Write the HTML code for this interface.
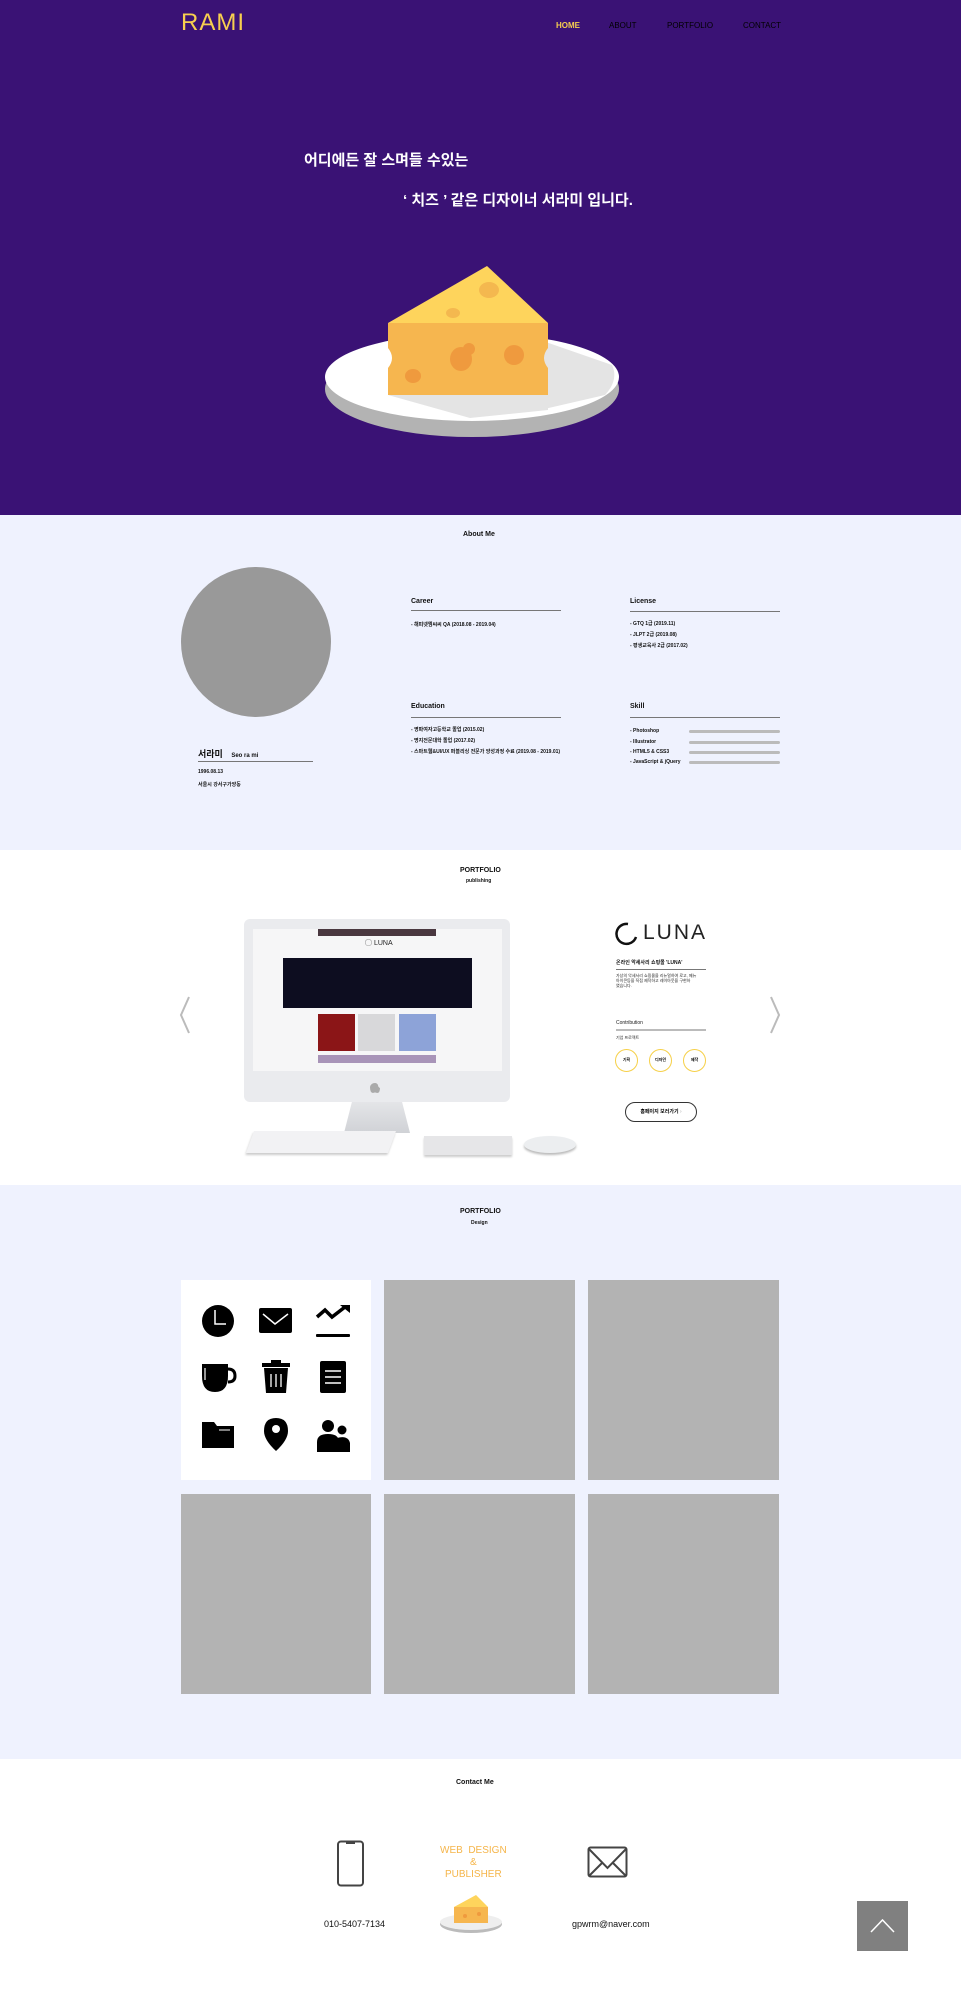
<!DOCTYPE html>
<html><head><meta charset="utf-8"><style>
*{margin:0;padding:0;box-sizing:border-box}
body{width:961px;height:2009px;position:relative;font-family:"Liberation Sans","Noto Sans CJK KR",sans-serif;background:#fff;overflow:hidden}
.a{position:absolute}
.t{position:absolute;white-space:nowrap;color:#111}
.s{font-size:5px;font-weight:bold}
.h{font-size:7px;font-weight:bold}
</style></head><body>
<!-- hero -->
<div class="a" style="left:0;top:0;width:961px;height:515px;background:#3a1275"></div>
<div class="t" style="left:181px;top:9px;font-size:24px;color:#f7cf4f;letter-spacing:1px">RAMI</div>
<div class="t" style="left:556px;top:21px;font-size:8px;font-weight:bold;color:#f7cf4f">HOME</div>
<div class="t" style="left:609px;top:21px;font-size:8px;color:#000">ABOUT</div>
<div class="t" style="left:667px;top:21px;font-size:8px;color:#000">PORTFOLIO</div>
<div class="t" style="left:743px;top:21px;font-size:8px;color:#000">CONTACT</div>
<div class="t" style="left:304px;top:149px;font-size:15px;font-weight:bold;color:#fff">어디에든 잘 스며들 수있는</div>
<div class="t" style="left:403px;top:189px;font-size:15px;font-weight:bold;color:#fff">‘ 치즈 ’ 같은 디자이너 서라미 입니다.</div>
<svg class="a" style="left:320px;top:260px" width="310" height="185" viewBox="320 260 310 185">
<ellipse cx="472" cy="389" rx="147" ry="48" fill="#b3b3b3"/>
<ellipse cx="472" cy="377" rx="147" ry="44" fill="#fff"/>
<path d="M540 340 L612 365 Q619 380 605 395 L540 410 Z" fill="#e4e4e4"/>
<path d="M388 395 L548 395 L548 410 L470 418 Z" fill="#e4e4e4"/>
<path d="M487 266 L548 323 L388 323 Z" fill="#fed45c"/>
<path d="M388 323 L548 323 L548 348 Q540 358 548 368 L548 395 L388 395 L388 368 Q396 358 388 348 Z" fill="#f6b64f"/>
<ellipse cx="489" cy="290" rx="10" ry="8" fill="#f4b84f"/>
<ellipse cx="453" cy="313" rx="7" ry="5" fill="#f4b84f"/>
<ellipse cx="461" cy="359" rx="11" ry="12" fill="#ef9a3e"/>
<ellipse cx="469" cy="349" rx="6" ry="6" fill="#ef9a3e"/>
<ellipse cx="514" cy="355" rx="10" ry="10" fill="#ef9a3e"/>
<ellipse cx="413" cy="376" rx="8" ry="7" fill="#ef9a3e"/>
</svg>
<!-- about -->
<div class="a" style="left:0;top:515px;width:961px;height:335px;background:#eff2fe"></div>
<div class="t h" style="left:463px;top:531px">About Me</div>
<div class="a" style="left:181px;top:567px;width:150px;height:150px;border-radius:50%;background:#999"></div>
<div class="t h" style="left:411px;top:598px">Career</div>
<div class="a" style="left:411px;top:610px;width:150px;height:1px;background:#777"></div>
<div class="t s" style="left:411px;top:621px">- 해피넷엠씨씨 QA (2018.08 - 2019.04)</div>
<div class="t h" style="left:630px;top:598px">License</div>
<div class="a" style="left:630px;top:611px;width:150px;height:1px;background:#777"></div>
<div class="t s" style="left:630px;top:620px">- GTQ 1급 (2019.11)</div>
<div class="t s" style="left:630px;top:631px">- JLPT 2급 (2019.08)</div>
<div class="t s" style="left:630px;top:642px">- 평생교육사 2급 (2017.02)</div>
<div class="t h" style="left:411px;top:703px">Education</div>
<div class="a" style="left:411px;top:717px;width:150px;height:1px;background:#777"></div>
<div class="t s" style="left:411px;top:726px">- 영파여자고등학교 졸업 (2015.02)</div>
<div class="t s" style="left:411px;top:737px">- 명지전문대학 졸업 (2017.02)</div>
<div class="t s" style="left:411px;top:748px">- 스마트웹&amp;UI/UX 퍼블리싱 전문가 양성과정 수료 (2019.08 - 2019.01)</div>
<div class="t h" style="left:630px;top:703px">Skill</div>
<div class="a" style="left:630px;top:717px;width:150px;height:1px;background:#777"></div>
<div class="t s" style="left:630px;top:728px">- Photoshop</div>
<div class="t s" style="left:630px;top:739px">- Illustrator</div>
<div class="t s" style="left:630px;top:749px">- HTML5 &amp; CSS3</div>
<div class="t s" style="left:630px;top:759px">- JavaScript &amp; jQuery</div>
<div class="a" style="left:689px;top:730px;width:91px;height:3px;background:#bbb;border-radius:2px"></div>
<div class="a" style="left:689px;top:741px;width:91px;height:3px;background:#bbb;border-radius:2px"></div>
<div class="a" style="left:689px;top:751px;width:91px;height:3px;background:#bbb;border-radius:2px"></div>
<div class="a" style="left:689px;top:761px;width:91px;height:3px;background:#bbb;border-radius:2px"></div>
<div class="t" style="left:198px;top:747px;font-size:9px;font-weight:bold">서라미 <span style="font-size:6px;margin-left:6px">Seo ra mi</span></div>
<div class="a" style="left:198px;top:761px;width:115px;height:1px;background:#777"></div>
<div class="t s" style="left:198px;top:769px">1996.08.13</div>
<div class="t s" style="left:198px;top:781px">서울시 강서구가양동</div>
<!-- portfolio publishing -->
<div class="t h" style="left:460px;top:867px">PORTFOLIO</div>
<div class="t s" style="left:466px;top:878px">publishing</div>
<svg class="a" style="left:178px;top:995px" width="14" height="40"><path d="M11 2 L3 20 L11 38" stroke="#bbb" stroke-width="2" fill="none"/></svg>
<svg class="a" style="left:768px;top:995px" width="14" height="40"><path d="M3 2 L11 20 L3 38" stroke="#bbb" stroke-width="2" fill="none"/></svg>
<div class="a" style="left:244px;top:919px;width:266px;height:183px;background:#eaebee;border-radius:6px"></div>
<div class="a" style="left:253px;top:929px;width:249px;height:142px;background:#f6f6f7"></div>
<div class="a" style="left:318px;top:929px;width:118px;height:7px;background:#4a3840"></div>
<div class="t" style="left:365px;top:938px;font-size:7px;color:#222">◯ LUNA</div>
<div class="a" style="left:283px;top:958px;width:189px;height:50px;background:#0d0d20"></div>
<div class="a" style="left:318px;top:1014px;width:37px;height:37px;background:#8b1517"></div>
<div class="a" style="left:358px;top:1014px;width:37px;height:37px;background:#d8d8da"></div>
<div class="a" style="left:399px;top:1014px;width:37px;height:37px;background:#8da3d8"></div>
<div class="a" style="left:318px;top:1055px;width:118px;height:8px;background:#a894b8"></div>
<svg class="a" style="left:369px;top:1080px" width="12" height="14"><path d="M6 3 Q2 3 1 7 Q1 13 4 13 Q6 12 8 13 Q11 13 11 8 Q9 7 9 5 Q8 3 6 3Z" fill="#aaa"/></svg>
<div class="a" style="left:344px;top:1102px;width:66px;height:31px;background:linear-gradient(#e4e5e8,#d0d2d6);clip-path:polygon(12% 0,88% 0,100% 100%,0 100%)"></div>
<div class="a" style="left:250px;top:1131px;width:142px;height:22px;background:#f2f2f4;transform:skewX(-20deg);box-shadow:0 2px 2px #ccc"></div>
<div class="a" style="left:424px;top:1136px;width:88px;height:19px;background:#e6e6e8;box-shadow:0 2px 2px #ccc"></div>
<div class="a" style="left:524px;top:1136px;width:52px;height:17px;background:#eceef0;border-radius:50%;box-shadow:0 2px 2px #bbb"></div>
<svg class="a" style="left:614px;top:921px" width="25" height="25"><path d="M14 3 A10 10 0 1 0 22 16" stroke="#111" stroke-width="2.5" fill="none"/></svg>
<div class="t" style="left:643px;top:921px;font-size:21px;color:#222;letter-spacing:2px">LUNA</div>
<div class="t s" style="left:616px;top:959px">온라인 악세사리 쇼핑몰 'LUNA'</div>
<div class="a" style="left:616px;top:969px;width:90px;height:1px;background:#777"></div>
<div class="t" style="left:616px;top:973px;font-size:4px;line-height:5px;color:#222">가상의 악세서리 쇼핑몰을 리뉴얼하여 로고, 메뉴<br>아이콘등을 직접 제작하고 레이아웃을 구현하<br>였습니다.</div>
<div class="t" style="left:616px;top:1020px;font-size:5px;color:#222">Contribution</div>
<div class="a" style="left:616px;top:1029px;width:90px;height:2px;background:#bbb"></div>
<div class="t" style="left:616px;top:1035px;font-size:4px;color:#222">기업 프로젝트</div>
<div class="a" style="left:615px;top:1049px;width:23px;height:23px;border:1.5px solid #f6d048;border-radius:50%;font-size:4px;font-weight:bold;text-align:center;line-height:20px">기획</div>
<div class="a" style="left:649px;top:1049px;width:23px;height:23px;border:1.5px solid #f6d048;border-radius:50%;font-size:4px;font-weight:bold;text-align:center;line-height:20px">디자인</div>
<div class="a" style="left:683px;top:1049px;width:23px;height:23px;border:1.5px solid #f6d048;border-radius:50%;font-size:4px;font-weight:bold;text-align:center;line-height:20px">제작</div>
<div class="a" style="left:625px;top:1102px;width:72px;height:20px;border:1px solid #333;border-radius:10px;font-size:5px;font-weight:bold;text-align:center;line-height:18px">홈페이지 보러가기 <span style="color:#bbb">›</span></div>
<!-- design -->
<div class="a" style="left:0;top:1185px;width:961px;height:574px;background:#eff2fe"></div>
<div class="t h" style="left:460px;top:1208px">PORTFOLIO</div>
<div class="t s" style="left:471px;top:1220px">Design</div>
<div class="a" style="left:181px;top:1280px;width:190px;height:200px;background:#fff"></div>
<div class="a" style="left:384px;top:1280px;width:191px;height:200px;background:#b3b3b3"></div>
<div class="a" style="left:588px;top:1280px;width:191px;height:200px;background:#b3b3b3"></div>
<div class="a" style="left:181px;top:1494px;width:190px;height:200px;background:#b3b3b3"></div>
<div class="a" style="left:384px;top:1494px;width:191px;height:200px;background:#b3b3b3"></div>
<div class="a" style="left:588px;top:1494px;width:191px;height:200px;background:#b3b3b3"></div>
<svg class="a" style="left:180px;top:1280px" width="192" height="200" viewBox="0 0 192 200">
<circle cx="38" cy="41" r="16" fill="#000"/><path d="M35 30 V44 H46" stroke="#fff" stroke-width="1.5" fill="none"/>
<rect x="79" y="28" width="33" height="25" rx="2" fill="#000"/><path d="M83 34 L95 44 L108 34" stroke="#fff" stroke-width="1.5" fill="none"/>
<path d="M137 37 L145 30 L152 37 L165 27" stroke="#000" stroke-width="3.5" fill="none"/><path d="M160 25 L170 25 L170 33 Z" fill="#000"/><rect x="136" y="54" width="34" height="3" rx="1" fill="#000"/>
<path d="M22 84 H48 V96 Q48 112 35 112 Q22 112 22 96 Z" fill="#000"/><path d="M48 89 Q55 89 55 96 Q55 102 48 102" stroke="#000" stroke-width="3" fill="none"/><path d="M25 88 V100" stroke="#fff" stroke-width="1.2"/>
<rect x="82" y="83" width="28" height="4" fill="#000"/><rect x="91" y="80" width="10" height="3" fill="#000"/><path d="M84 88 H108 L106 113 H86 Z" fill="#000"/><path d="M91 94 V107 M96 94 V107 M101 94 V107" stroke="#fff" stroke-width="1.3"/>
<rect x="140" y="81" width="26" height="32" rx="2" fill="#000"/><path d="M145 91 H161 M145 97 H161 M145 103 H161" stroke="#fff" stroke-width="1.5"/>
<path d="M22 142 H34 L37 146 H54 V168 H22 Z" fill="#000"/><path d="M39 150 H50" stroke="#fff" stroke-width="1"/>
<path d="M96 138 Q84 138 84 151 Q84 160 96 171 Q108 160 108 151 Q108 138 96 138Z" fill="#000"/><circle cx="96" cy="149" r="4" fill="#fff"/>
<circle cx="148" cy="146" r="6" fill="#000"/><circle cx="162" cy="150" r="4.5" fill="#000"/><path d="M137 172 V162 Q137 154 148 154 Q159 154 159 162 V172 Z" fill="#000"/><path d="M157 158 Q168 155 170 163 V172 H157Z" fill="#000"/>
</svg>
<!-- contact -->
<div class="t h" style="left:456px;top:1779px">Contact Me</div>
<svg class="a" style="left:336px;top:1840px" width="30" height="48"><rect x="2" y="1.5" width="25" height="44" rx="3" stroke="#444" stroke-width="2" fill="none"/><path d="M10 3 H19" stroke="#444" stroke-width="2"/></svg>
<div class="t" style="left:324px;top:1919px;font-size:9px">010-5407-7134</div>
<div class="t" style="left:440px;top:1845px;font-size:10px;color:#f5b54a;text-align:center;line-height:12px">WEB&nbsp; DESIGN<br>&amp;<br>PUBLISHER</div>
<svg class="a" style="left:440px;top:1895px" width="64" height="40" viewBox="0 0 64 40"><ellipse cx="31" cy="29" rx="31" ry="9" fill="#bbb"/><ellipse cx="31" cy="27" rx="31" ry="8" fill="#eee"/><path d="M36 0 L48 12 L14 12 Z" fill="#fed45c"/><path d="M14 12 H48 V28 H14 Z" fill="#f6b64f"/><circle cx="25" cy="21" r="2" fill="#ef9a3e"/><circle cx="39" cy="19" r="2" fill="#ef9a3e"/></svg>
<svg class="a" style="left:587px;top:1846px" width="42" height="32"><rect x="1.5" y="1.5" width="38" height="29" rx="2" stroke="#444" stroke-width="2" fill="none"/><path d="M2 3 L20.5 22 L39 3 M2 30 L15 17 M39 30 L26 17" stroke="#444" stroke-width="2" fill="none"/></svg>
<div class="t" style="left:572px;top:1919px;font-size:9px">gpwrm@naver.com</div>
<div class="a" style="left:857px;top:1901px;width:51px;height:50px;background:#808080"><svg width="51" height="50"><path d="M14 31 L25.5 19 L37 31" stroke="#fff" stroke-width="1.5" fill="none"/></svg></div>
</body></html>
